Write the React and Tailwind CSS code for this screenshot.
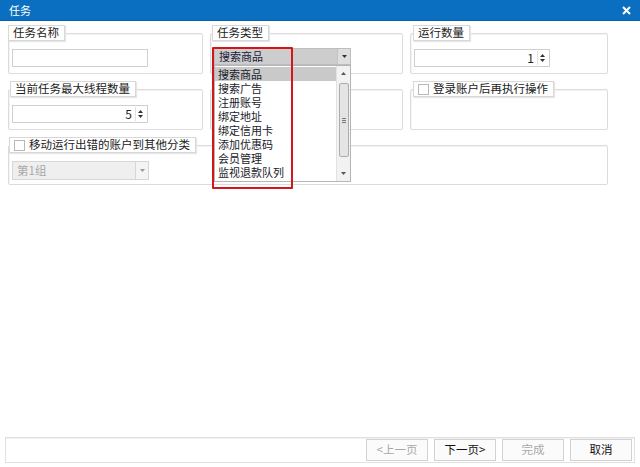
import React from "react";

const FONT = "font-['Noto_Sans_CJK_SC','Microsoft_YaHei',sans-serif]";

function Checkbox() {
  return <span className="inline-block w-[11px] h-[11px] border border-[#b8b8b8] bg-white shrink-0" />;
}

function Group({ label, checkbox, children, boxH = "h-[41px]", labelMl = "ml-0" }) {
  return (
    <div className="flex flex-col">
      {label ? (
        <div
          className={`relative z-10 ${labelMl} self-start h-[16px] border border-[#d8d8d8] bg-white pl-[4px] pr-[5px] flex items-center gap-[4px] text-[11.5px] leading-none text-[#222] shadow-[1px_1px_1px_#e6e6e6]`}
        >
          {checkbox && <Checkbox />}
          <span>{label}</span>
        </div>
      ) : (
        <div className="h-[16px]" />
      )}
      <div className={`relative -mt-[8px] ${boxH} border border-[#dcdcdc] rounded-[2px] pt-[15px] px-[3px] shadow-[inset_1px_1px_0_#f4f4f4]`}>
        {children}
      </div>
    </div>
  );
}

function TextInput() {
  return <div className="w-[136px] h-[18px] border border-[#cfcfcf] bg-white" />;
}

function Spinner({ value }) {
  return (
    <div className="w-[136px] h-[18px] border border-[#cfcfcf] bg-white flex items-center justify-end text-[12px] leading-none text-[#222]">
      <span className="mr-[3px]">{value}</span>
      <div className="w-[10px] h-[14px] border-l border-[#e0e0e0] flex flex-col items-center justify-center gap-[2px] mr-[2px]">
        <svg width="5" height="3" viewBox="0 0 5 3"><path d="M2.5 0L5 3H0z" fill="#333" /></svg>
        <svg width="5" height="3" viewBox="0 0 5 3"><path d="M0 0h5L2.5 3z" fill="#333" /></svg>
      </div>
    </div>
  );
}

function Arrow({ down = true, color = "#333" }) {
  return (
    <svg width="5" height="3" viewBox="0 0 5 3">
      <path d={down ? "M0 0h5L2.5 3z" : "M2.5 0L5 3H0z"} fill={color} />
    </svg>
  );
}

const items = ["搜索商品", "搜索广告", "注册账号", "绑定地址", "绑定信用卡", "添加优惠码", "会员管理", "监视退款队列"];

function Dropdown() {
  return (
    <div className="relative w-[137px] -ml-[1px] -mt-[1px]">
      <div className="h-[17px] flex bg-[#cdcdcd] border border-[#bdbdbd]">
        <div className="flex-1 flex items-center pl-[4px] text-[11px] leading-none text-[#1a1a3a]">搜索商品</div>
        <div className="w-[13px] bg-[#dedede] border-l border-[#c4c4c4] flex items-center justify-center">
          <Arrow />
        </div>
      </div>
      <div className="absolute left-0 top-full z-20 w-[137px] h-[117px] bg-white border border-[#b5b5b5] flex">
        <div className="flex-1 flex flex-col pt-[1px]">
          {items.map((t, i) => (
            <div
              key={t}
              className={`h-[14px] flex items-center pl-[3px] text-[11px] leading-[14px] text-[#1a1a2a] ${i === 0 ? "bg-[#c9c9c9]" : ""}`}
            >
              {t}
            </div>
          ))}
        </div>
        <div className="w-[14px] bg-[#f2f2f2] border-l border-[#e2e2e2] flex flex-col items-center">
          <div className="h-[15px] flex items-center justify-center"><Arrow down={false} color="#555" /></div>
          <div className="w-[10px] h-[74px] mt-[2px] rounded-[2px] border border-[#adadad] bg-[#e4e4e4] flex items-center justify-center">
            <div className="flex flex-col gap-[1px]">
              <span className="block w-[4px] h-px bg-[#777]" />
              <span className="block w-[4px] h-px bg-[#777]" />
              <span className="block w-[4px] h-px bg-[#777]" />
            </div>
          </div>
          <div className="flex-1" />
          <div className="h-[15px] flex items-center justify-center"><Arrow color="#555" /></div>
        </div>
      </div>
      <div className="absolute z-30 -left-[2px] -top-[1px] w-[81px] h-[142px] border-2 border-[#d4161c] rounded-[1px] pointer-events-none" />
    </div>
  );
}

function Button({ children, disabled }) {
  return (
    <div
      className={`w-[62px] h-[22px] border border-[#d2d2d2] bg-[#fbfbfb] flex items-center justify-center text-[11.5px] leading-none ${disabled ? "text-[#a8a8a8]" : "text-[#111]"}`}
    >
      {children}
    </div>
  );
}

export default function App() {
  return (
    <div className={`w-[640px] h-[467px] bg-white flex flex-col overflow-hidden ${FONT}`}>
      <div className="h-[21px] shrink-0 bg-[#0b6fc1] border-b border-[#0a5fa6] flex items-center justify-between pl-[9px] pr-[9px] text-white">
        <span className="text-[11px] leading-none">任务</span>
        <svg width="9" height="9" viewBox="0 0 9 9">
          <path d="M1 1L8 8M8 1L1 8" stroke="#fff" strokeWidth="2" />
        </svg>
      </div>

      <div className="pt-[4px] pl-[8px] grid grid-cols-[195px_193px_198px] gap-x-[7px] gap-y-[7px]">
        <Group label="任务名称">
          <TextInput />
        </Group>
        <Group label="任务类型" labelMl="ml-[2px]">
          <div className="pl-[1px]">
            <Dropdown />
          </div>
        </Group>
        <Group label="运行数量" labelMl="ml-[3px]">
          <Spinner value="1" />
        </Group>

        <Group label="当前任务最大线程数量" labelMl="ml-[2px]">
          <Spinner value="5" />
        </Group>
        <Group label="" boxH="h-[41px]">
          <div />
        </Group>
        <Group label="登录账户后再执行操作" checkbox labelMl="ml-[3px]">
          <div />
        </Group>

        <div className="col-span-3">
          <Group label="移动运行出错的账户到其他分类" checkbox boxH="h-[40px]" labelMl="ml-[1px]">
            <div className="w-[137px] h-[19px] border border-[#d6d6d6] bg-[#efefef] flex">
              <div className="flex-1 flex items-center pl-[4px] text-[11.5px] leading-none text-[#a8a8a8]">第1组</div>
              <div className="w-[13px] border-l border-[#d6d6d6] bg-[#f4f4f4] flex items-center justify-center">
                <Arrow color="#999" />
              </div>
            </div>
          </Group>
        </div>
      </div>

      <div className="flex-1" />

      <div className="mx-[5px] mb-[4px] h-[26px] border border-[#e0e0e0] flex items-center justify-end gap-[6px] pr-[2px] shadow-[inset_0_1px_0_#f2f2f2]">
        <Button disabled>&lt;上一页</Button>
        <Button>下一页&gt;</Button>
        <Button disabled>完成</Button>
        <Button>取消</Button>
      </div>
    </div>
  );
}
